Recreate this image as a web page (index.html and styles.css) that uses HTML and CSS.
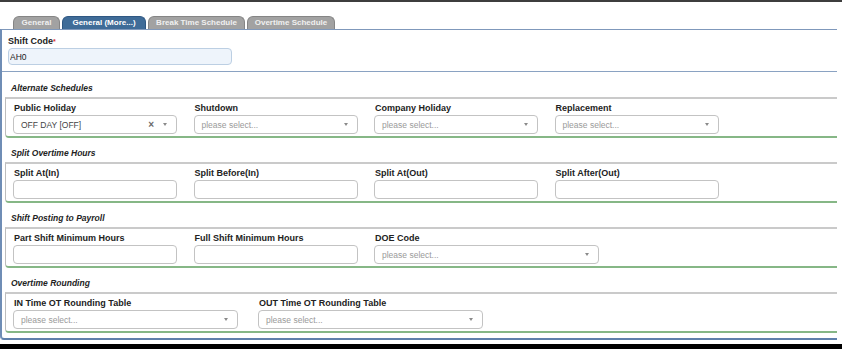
FILE: index.html
```html
<!DOCTYPE html>
<html lang="en">
<head>
  <meta charset="UTF-8">
  <title>Shift - General (More...)</title>
  <link rel="stylesheet" href="styles.css">
</head>
<body>
  <div class="page">
    <div class="topline"></div>

    <div class="tabs">
      <div class="tab t-general">General</div>
      <div class="tab t-more active">General (More...)</div>
      <div class="tab t-break">Break Time Schedule</div>
      <div class="tab t-ot">Overtime Schedule</div>
    </div>

    <div class="panel">
      <div class="head">
        <label class="lbl">Shift Code<span class="req">*</span></label>
        <input class="code-input" type="text" value="AH0" readonly>
      </div>

      <!-- Alternate Schedules -->
      <div class="section first">
        <div class="section-title">Alternate Schedules</div>
        <div class="box">
          <div class="row">
            <div class="field">
              <label class="lbl">Public Holiday</label>
              <div class="select">
                <span class="val">OFF DAY [OFF]</span>
                <span class="clear">×</span>
                <span class="arrow"></span>
              </div>
            </div>
            <div class="field">
              <label class="lbl">Shutdown</label>
              <div class="select"><span class="ph">please select...</span><span class="arrow"></span></div>
            </div>
            <div class="field">
              <label class="lbl">Company Holiday</label>
              <div class="select"><span class="ph">please select...</span><span class="arrow"></span></div>
            </div>
            <div class="field">
              <label class="lbl">Replacement</label>
              <div class="select"><span class="ph">please select...</span><span class="arrow"></span></div>
            </div>
          </div>
        </div>
      </div>

      <!-- Split Overtime Hours -->
      <div class="section">
        <div class="section-title">Split Overtime Hours</div>
        <div class="box">
          <div class="row">
            <div class="field">
              <label class="lbl">Split At(In)</label>
              <input class="txt" type="text">
            </div>
            <div class="field">
              <label class="lbl">Split Before(In)</label>
              <input class="txt" type="text">
            </div>
            <div class="field">
              <label class="lbl">Split At(Out)</label>
              <input class="txt" type="text">
            </div>
            <div class="field">
              <label class="lbl">Split After(Out)</label>
              <input class="txt" type="text">
            </div>
          </div>
        </div>
      </div>

      <!-- Shift Posting to Payroll -->
      <div class="section">
        <div class="section-title">Shift Posting to Payroll</div>
        <div class="box">
          <div class="row posting">
            <div class="field">
              <label class="lbl">Part Shift Minimum Hours</label>
              <input class="txt" type="text">
            </div>
            <div class="field">
              <label class="lbl">Full Shift Minimum Hours</label>
              <input class="txt" type="text">
            </div>
            <div class="field">
              <label class="lbl">DOE Code</label>
              <div class="select wide"><span class="ph">please select...</span><span class="arrow"></span></div>
            </div>
          </div>
        </div>
      </div>

      <!-- Overtime Rounding -->
      <div class="section">
        <div class="section-title">Overtime Rounding</div>
        <div class="box">
          <div class="row rounding">
            <div class="field">
              <label class="lbl">IN Time OT Rounding Table</label>
              <div class="select wide"><span class="ph">please select...</span><span class="arrow"></span></div>
            </div>
            <div class="field">
              <label class="lbl">OUT Time OT Rounding Table</label>
              <div class="select wide"><span class="ph">please select...</span><span class="arrow"></span></div>
            </div>
          </div>
        </div>
      </div>
    </div>
  </div>
</body>
</html>
```

FILE: styles.css
```css
html,
body {
  margin: 0;
  background: #000;
}

body {
  font-family: "Liberation Sans", Arial, sans-serif;
  color: #222;
}

.page {
  background: #fff;
  height: 344px;
  overflow: hidden;
}

.topline {
  height: 2px;
  background: #3d3d3d;
}

/* tabs */
.tabs {
  display: flex;
  gap: 2px;
  margin-top: 14px;
  padding-left: 13px;
  height: 13px;
}

.tab {
  box-sizing: border-box;
  border: 1px solid #858585;
  border-bottom: none;
  border-radius: 6px 6px 0 0;
  background: #a2a2a2;
  color: #f0f0f0;
  font-size: 8px;
  font-weight: bold;
  line-height: 12px;
  text-align: center;
  white-space: nowrap;
}

.t-general { width: 47px; }
.t-more { width: 84px; }
.t-break { width: 97px; }
.t-ot { width: 88px; }

.tab.active {
  background: #3f6c98;
  border-color: #2f5883;
  color: #fff;
}

/* panel */
.panel {
  width: 835px;
  border-left: 2px solid #6f8db5;
  border-top: 1px solid #7f98bb;
  border-bottom: 2px solid #5f80ab;
  border-bottom-left-radius: 4px;
  padding-bottom: 5px;
}

.head {
  padding: 6px 0 6px 6px;
  border-bottom: 1px solid #8aa2c2;
}

.lbl {
  display: block;
  font-size: 9px;
  font-weight: bold;
  line-height: 11px;
  margin-bottom: 1px;
  white-space: nowrap;
}

.req {
  color: #d8302f;
  font-size: 7px;
  vertical-align: top;
}

.code-input {
  display: block;
  box-sizing: border-box;
  width: 224px;
  height: 17px;
  margin: 0;
  padding: 0 0 0 1px;
  border: 1px solid #bccfe3;
  border-radius: 4px;
  background: #eef4fb;
  font-family: inherit;
  font-size: 8.5px;
  color: #222;
  outline: none;
}

/* sections */
.section {
  padding-top: 10px;
}

.section.first {
  padding-top: 11px;
}

.section-title {
  padding-left: 9px;
  margin-bottom: 4px;
  font-size: 8.5px;
  font-weight: bold;
  font-style: italic;
  line-height: 10px;
}

.box {
  margin-left: 3px;
  padding: 4px 0 2px 7px;
  border-top: 2px solid #cacaca;
  border-left: 1px solid #bdbdbd;
  border-bottom: 2px solid #86b786;
  border-bottom-left-radius: 4px;
}

.row {
  display: grid;
  grid-template-columns: repeat(4, 164px);
  column-gap: 16.5px;
}

.row.posting {
  grid-template-columns: 164px 164px 225px;
}

.row.rounding {
  grid-template-columns: 225px 225px;
  column-gap: 20px;
}

.field .lbl {
  padding-left: 1px;
}

.txt,
.select {
  display: block;
  box-sizing: border-box;
  width: 164px;
  height: 19px;
  margin: 0;
  border: 1px solid #c3c3c3;
  border-radius: 4px;
  background: #fff;
  outline: none;
}

.select {
  display: flex;
  align-items: center;
  padding: 0 9px 0 7px;
  font-size: 8.5px;
  white-space: nowrap;
}

.select.wide {
  width: 225px;
}

.select .val {
  color: #444;
}

.select .ph {
  color: #9a9a9a;
}

.select .clear {
  margin-left: auto;
  margin-right: 9px;
  color: #6a6a6a;
  font-size: 10px;
  font-weight: bold;
  line-height: 10px;
}

.select .arrow {
  margin-left: auto;
  width: 0;
  height: 0;
  border-left: 2.5px solid transparent;
  border-right: 2.5px solid transparent;
  border-top: 3px solid #8a8a8a;
}

.select .clear + .arrow {
  margin-left: 0;
}
```
